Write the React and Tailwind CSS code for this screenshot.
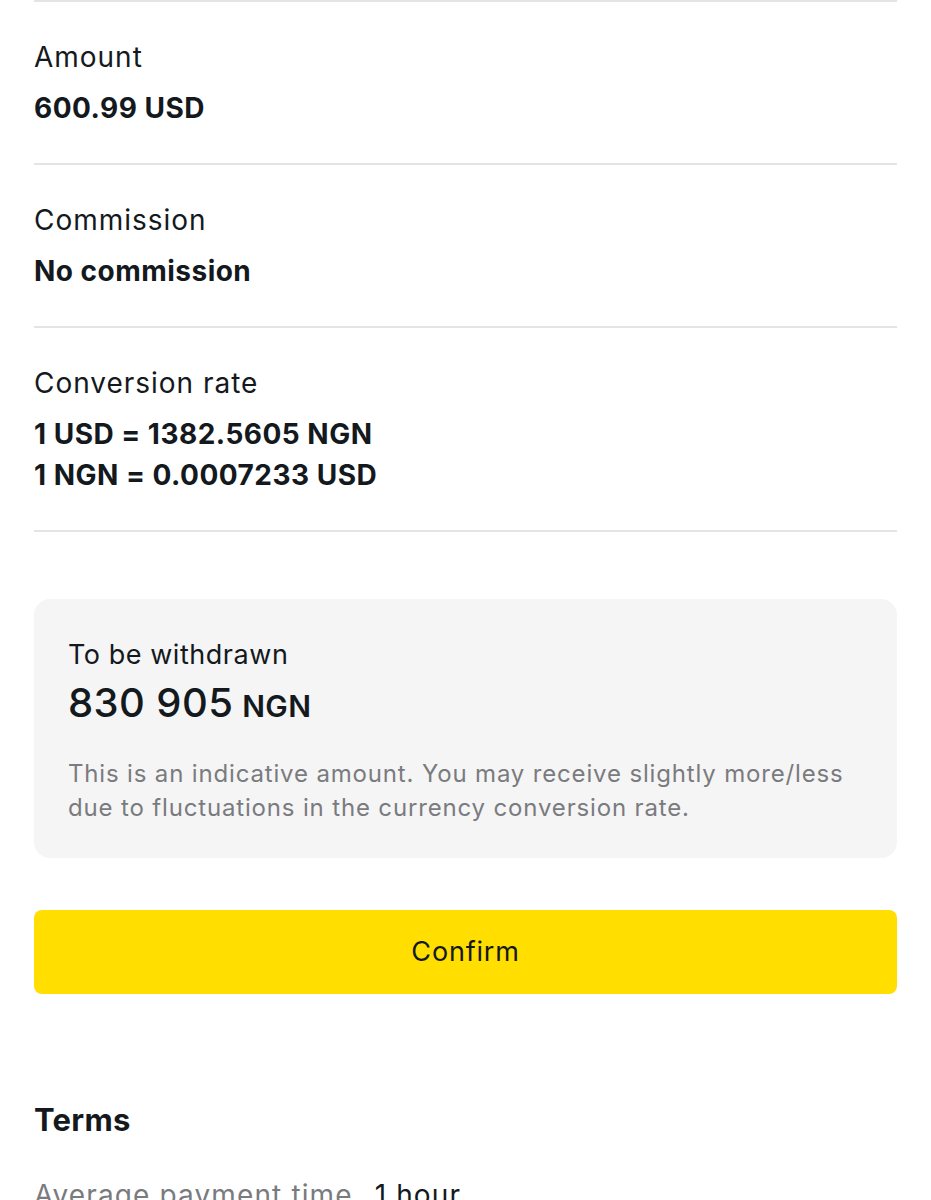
import React from 'react';

const rows = [
  { label: 'Amount', values: ['600.99 USD'] },
  { label: 'Commission', values: ['No commission'] },
  { label: 'Conversion rate', values: ['1 USD = 1382.5605 NGN', '1 NGN = 0.0007233 USD'] },
];

const App = () => {
  return (
    <div className="min-h-[1200px] bg-white font-['Inter',sans-serif] text-[#14191e] tracking-[0.03em] overflow-hidden">
      <div className="px-[34px]">
        {rows.map((row) => (
          <div key={row.label} className="border-t-2 border-[#e4e4e6] pt-[36px] pb-[34px]">
            <div className="text-[28px] leading-[38px] tracking-[0.035em]">{row.label}</div>
            <div className="mt-[12px] flex flex-col">
              {row.values.map((v) => (
                <div key={v} className="text-[28px] leading-[41px] font-bold">{v}</div>
              ))}
            </div>
          </div>
        ))}
        <div className="border-t-2 border-[#e4e4e6]" />

        <div className="mt-[67px] rounded-[16px] bg-[#f5f5f5] px-[34px] pt-[38px] pb-[33px]">
          <div className="text-[27px] leading-[36px] tracking-[0.02em]">To be withdrawn</div>
          <div className="mt-[6px] flex items-baseline gap-[9px]">
            <span className="text-[40px] leading-[48px] font-medium tracking-[0.01em]">830 905</span>
            <span className="text-[30px] font-semibold tracking-[0.01em]">NGN</span>
          </div>
          <p className="mt-[28px] text-[24px] leading-[34px] tracking-[0.035em] text-[#7a7b7f]">
            This is an indicative amount. You may receive slightly more/less due to fluctuations in the currency conversion rate.
          </p>
        </div>

        <button className="mt-[52px] w-full h-[84px] rounded-[8px] bg-[#ffde00] text-[27px] tracking-[0.03em] text-[#14191e]">
          Confirm
        </button>

        <h2 className="mt-[106px] text-[31px] leading-[40px] font-bold tracking-[0.01em]">Terms</h2>
        <div className="mt-[37px] flex gap-[22px] text-[28px] leading-[36px] tracking-[0.04em]">
          <span className="text-[#7a7b7f]">Average payment time</span>
          <span>1 hour</span>
        </div>
      </div>
    </div>
  );
};

export default App;
